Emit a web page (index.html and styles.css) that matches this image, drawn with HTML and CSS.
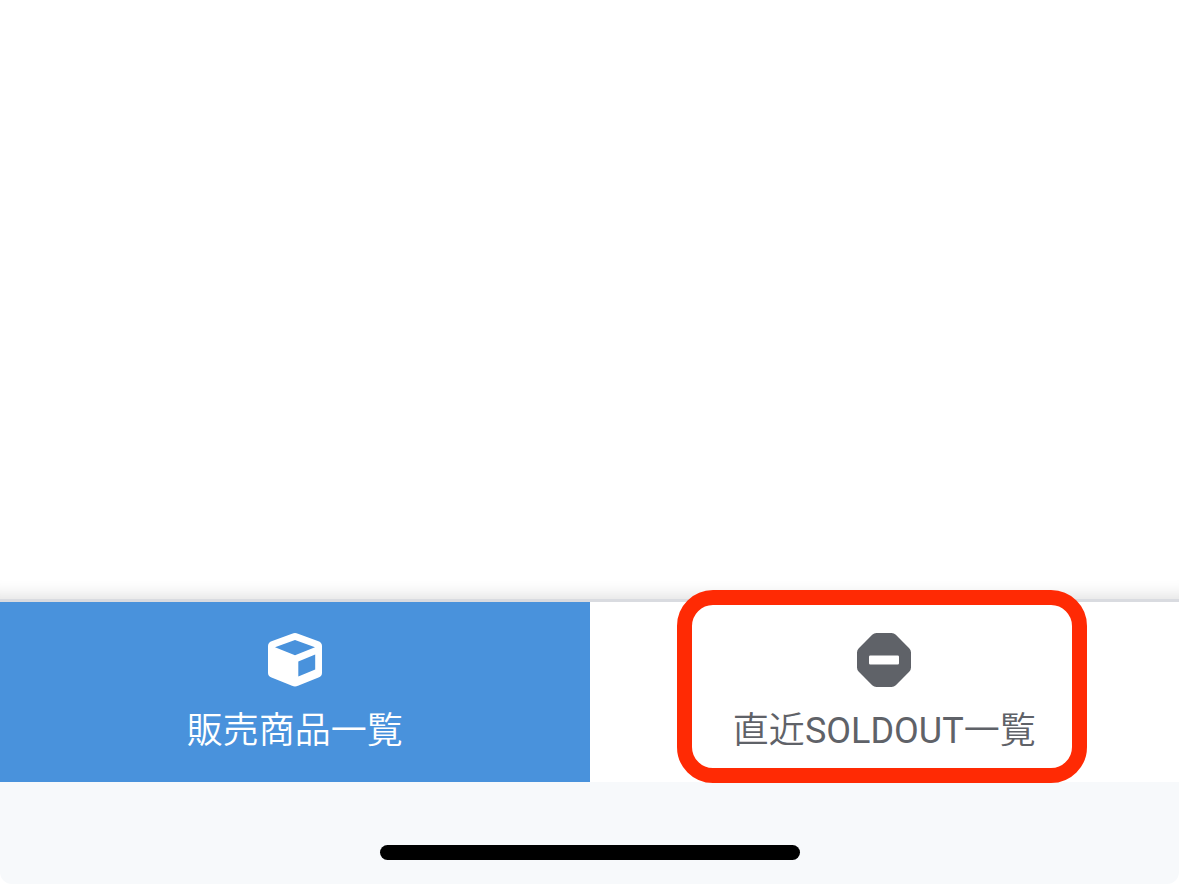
FILE: index.html
```html
<!DOCTYPE html>
<html lang="ja">
<head>
<meta charset="utf-8">
<meta name="viewport" content="width=device-width, initial-scale=1">
<title>販売商品一覧</title>
<link rel="stylesheet" href="styles.css">
</head>
<body>
<div class="screen">
  <main class="content"></main>
  <nav class="tabs">
    <button class="tab tab-active" type="button" aria-current="page">
      <svg class="tab-icon" viewBox="0 0 54 54" aria-hidden="true">
        <path fill="currentColor" fill-rule="evenodd" d="M24 .7Q27-.5 30 .7L50.500 8.200Q54 9.600 54 13V40Q54 43.200 50.500 44.600L30 52.800Q27 54 24 52.800L3.500 44.600Q0 43.200 0 40V13Q0 9.600 3.500 8.200ZM27 7L7 14.300L27 22.300L47 14.300ZM30.300 28.500V43.500L47.200 36.500V21.500Z"/>
      </svg>
      <span class="tab-label">販売商品一覧</span>
    </button>
    <button class="tab" type="button">
      <svg class="tab-icon" viewBox="0 0 54 54" aria-hidden="true">
        <path fill="currentColor" fill-rule="evenodd" d="M19.500 0H34.500Q37 0 38.800 1.800L52.200 15.200Q54 17 54 19.500V34.500Q54 37 52.200 38.800L38.800 52.200Q37 54 34.500 54H19.500Q17 54 15.200 52.200L1.800 38.800Q0 37 0 34.500V19.500Q0 17 1.800 15.200L15.200 1.800Q17 0 19.500 0ZM13.300 22.500Q12 22.500 12 23.800V30.200Q12 31.500 13.300 31.500H40.700Q42 31.500 42 30.200V23.800Q42 22.500 40.700 22.500Z"/>
      </svg>
      <span class="tab-label">直近<span class="latin">SOLDOUT</span>一覧</span>
      <span class="highlight" aria-hidden="true"></span>
    </button>
  </nav>
  <footer class="home-area"><div class="home-indicator"></div></footer>
</div>
</body>
</html>
```
FILE: styles.css
```css
* {
  box-sizing: border-box;
}

body {
  margin: 0;
  background: #fff;
  font-family: Roboto, "Noto Sans CJK JP", sans-serif;
}

.screen {
  display: flex;
  flex-direction: column;
  min-height: 100vh;
}

.content {
  flex: 1;
  box-shadow: inset 0 -20px 16px -16px rgba(0, 0, 0, 0.12);
}

.tabs {
  display: grid;
  grid-template-columns: 1fr 1fr;
  border-top: 3px solid #d9dbe0;
}

.tab {
  position: relative;
  display: flex;
  flex-direction: column;
  align-items: center;
  gap: 21px;
  padding: 31px 0 28px;
  border: 0;
  background: #fff;
  color: #5f6268;
  font: inherit;
}

.tab-active {
  background: #4992dc;
  color: #fff;
}

.tab-icon {
  width: 54px;
  height: 54px;
}

.tab-label {
  font-size: 36px;
  font-weight: 350;
  line-height: 46px;
  white-space: nowrap;
}

.latin {
  font-weight: 400;
}

.highlight {
  position: absolute;
  z-index: 1;
  top: -12px;
  bottom: -1px;
  left: calc(50% - 207px);
  width: 410px;
  border: 15px solid #ff2a04;
  border-radius: 36px;
}

.home-area {
  display: flex;
  justify-content: center;
  padding: 63px 0 24px;
  border-radius: 0 0 12px 12px;
  background: #f7f9fb;
}

.home-indicator {
  width: 420px;
  height: 15px;
  border-radius: 8px;
  background: #000;
}
```
